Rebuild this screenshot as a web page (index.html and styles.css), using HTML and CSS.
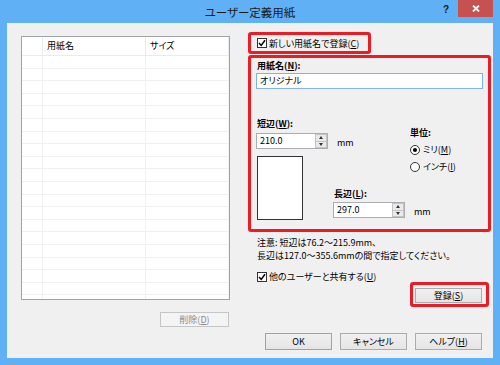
FILE: index.html
```html
<!DOCTYPE html>
<html lang="ja">
<head>
<meta charset="utf-8">
<title>ユーザー定義用紙</title>
<link rel="stylesheet" href="styles.css">
</head>
<body>
<div class="window">
  <div class="titlebar">
    <div></div>
    <div class="title">ユーザー定義用紙</div>
    <div class="controls">
      <span class="help">?</span>
      <span class="close"><svg width="8" height="7" viewBox="0 0 8 7"><path d="M1 0.5 L7 6.5 M7 0.5 L1 6.5" stroke="#fff" stroke-width="1.8"/></svg></span>
    </div>
  </div>
  <div class="client">
    <div class="main">
      <div class="left">
        <div class="list">
          <div class="list-head"><span class="c0"></span><span class="c1">用紙名</span><span class="c2">サイズ</span></div>
          <div class="list-row"><span class="c0"></span><span class="c1"></span><span class="c2"></span></div>
          <div class="list-row"><span class="c0"></span><span class="c1"></span><span class="c2"></span></div>
          <div class="list-row"><span class="c0"></span><span class="c1"></span><span class="c2"></span></div>
          <div class="list-row"><span class="c0"></span><span class="c1"></span><span class="c2"></span></div>
          <div class="list-row"><span class="c0"></span><span class="c1"></span><span class="c2"></span></div>
          <div class="list-row"><span class="c0"></span><span class="c1"></span><span class="c2"></span></div>
          <div class="list-row"><span class="c0"></span><span class="c1"></span><span class="c2"></span></div>
          <div class="list-row"><span class="c0"></span><span class="c1"></span><span class="c2"></span></div>
          <div class="list-row"><span class="c0"></span><span class="c1"></span><span class="c2"></span></div>
          <div class="list-row"><span class="c0"></span><span class="c1"></span><span class="c2"></span></div>
          <div class="list-row"><span class="c0"></span><span class="c1"></span><span class="c2"></span></div>
          <div class="list-row"><span class="c0"></span><span class="c1"></span><span class="c2"></span></div>
          <div class="list-row"><span class="c0"></span><span class="c1"></span><span class="c2"></span></div>
          <div class="list-row"><span class="c0"></span><span class="c1"></span><span class="c2"></span></div>
          <div class="list-row"><span class="c0"></span><span class="c1"></span><span class="c2"></span></div>
          <div class="list-row"><span class="c0"></span><span class="c1"></span><span class="c2"></span></div>
          <div class="list-row"><span class="c0"></span><span class="c1"></span><span class="c2"></span></div>
          <div class="list-row"><span class="c0"></span><span class="c1"></span><span class="c2"></span></div>
          <div class="list-row"><span class="c0"></span><span class="c1"></span><span class="c2"></span></div>
          <div class="list-row"><span class="c0"></span><span class="c1"></span><span class="c2"></span></div>
        </div>
        <div class="btn disabled del-btn">削除(<u>D</u>)</div>
      </div>
      <div class="right">
        <div class="hl hl-new">
          <div class="check"><span class="box"><svg width="8" height="8" viewBox="0 0 8 8"><path d="M1 4 L3.2 6.4 L7 1.2" fill="none" stroke="#000" stroke-width="1.5"/></svg></span><span>新しい用紙名で登録(<u>C</u>)</span></div>
        </div>
        <div class="hl hl-form">
          <div class="label">用紙名(<u>N</u>):</div>
          <div class="textbox">オリジナル</div>
          <div class="dims">
            <div class="col col-short">
              <div class="label">短辺(<u>W</u>):</div>
              <div class="spin-row">
                <div class="spin"><span class="val">210.0</span><span class="arrows"><span class="arr"><i class="tri up"></i></span><span class="arr"><i class="tri down"></i></span></span></div>
                <span class="unit">mm</span>
              </div>
              <div class="preview"></div>
            </div>
            <div class="col col-long">
              <div class="label">長辺(<u>L</u>):</div>
              <div class="spin-row">
                <div class="spin"><span class="val">297.0</span><span class="arrows"><span class="arr"><i class="tri up"></i></span><span class="arr"><i class="tri down"></i></span></span></div>
                <span class="unit">mm</span>
              </div>
            </div>
            <div class="col col-unit">
              <div class="label">単位:</div>
              <div class="radio first"><span class="dot on"></span><span>ミリ(<u>M</u>)</span></div>
              <div class="radio"><span class="dot"></span><span>インチ(<u>I</u>)</span></div>
            </div>
          </div>
        </div>
        <div class="note"><div>注意: 短辺は76.2～215.9mm、</div><div>長辺は127.0～355.6mmの間で指定してください。</div></div>
        <div class="check share"><span class="box"><svg width="8" height="8" viewBox="0 0 8 8"><path d="M1 4 L3.2 6.4 L7 1.2" fill="none" stroke="#000" stroke-width="1.5"/></svg></span><span>他のユーザーと共有する(<u>U</u>)</span></div>
        <div class="reg-row">
          <div class="hl hl-reg"><div class="btn reg-btn">登録(<u>S</u>)</div></div>
        </div>
      </div>
    </div>
    <div class="footer">
      <div class="btn default">OK</div>
      <div class="btn">キャンセル</div>
      <div class="btn">ヘルプ(<u>H</u>)</div>
    </div>
  </div>
</div>
</body>
</html>
```

FILE: styles.css
```css
* { box-sizing: border-box; }
html, body { margin: 0; padding: 0; }
body {
  width: 500px;
  height: 365px;
  overflow: hidden;
  font-family: "Noto Sans CJK JP", "Noto Sans", sans-serif;
  font-feature-settings: "palt";
  color: #000;
}
u { text-decoration: underline; text-underline-offset: 1px; }

.window {
  width: 500px;
  height: 365px;
  background: #5fb0f4;
  display: flex;
  flex-direction: column;
}

.titlebar {
  height: 23px;
  display: grid;
  grid-template-columns: 1fr auto 1fr;
  align-items: start;
}
.title {
  font-size: 11.5px;
  line-height: 24px;
  color: #1a1a1a;
}
.controls {
  justify-self: end;
  display: flex;
  align-items: flex-start;
  padding-right: 7px;
}
.help {
  font-family: "Liberation Sans", sans-serif;
  font-weight: bold;
  font-size: 10px;
  line-height: 10px;
  margin-top: 5px;
  margin-right: 9px;
  color: #1a1a1a;
}
.close {
  width: 35px;
  height: 17px;
  background: #c75050;
  display: flex;
  align-items: center;
  justify-content: center;
}

.client {
  flex: 1;
  margin: 0 7px 7px 7px;
  background: #f0f0f0;
  padding: 9px 0 8px 14px;
  display: flex;
  flex-direction: column;
  font-size: 9px;
  line-height: 11px;
}

.main {
  display: flex;
  align-items: flex-start;
}

.left {
  width: 209px;
  display: flex;
  flex-direction: column;
}
.list {
  margin-top: 4px;
  height: 264px;
  border: 1px solid #a3a3a3;
  background: #fff;
  overflow: hidden;
}
.list-head, .list-row {
  display: grid;
  grid-template-columns: 20px 103px 1fr;
}
.list-head {
  height: 19px;
  border-bottom: 1px solid #e3ecf7;
}
.list-head span {
  line-height: 18px;
  padding-left: 4px;
  border-left: 1px solid #e3ecf7;
}
.list-head .c0 { border-left: none; }
.list-head .c2 { border-right: 1px solid #e3ecf7; }
.list-row {
  height: 12.6px;
  border-bottom: 1px solid #f0f0f0;
}
.list-row span { border-left: 1px solid #f0f0f0; }
.list-row .c0 { border-left: none; }
.list-row .c2 { border-right: 1px solid #f0f0f0; }

.btn {
  height: 17px;
  width: 67px;
  border: 1px solid #acacac;
  background: linear-gradient(#f0f0f0, #e5e5e5);
  display: flex;
  align-items: center;
  justify-content: center;
  font-size: 9px;
  line-height: 11px;
}
.btn.default { border-color: #6bb0ea; }
.btn.disabled {
  background: #f4f4f4;
  border-color: #c3c6c9;
  color: #8a8a8a;
}
.del-btn {
  margin-top: 12px;
  align-self: flex-end;
  margin-right: 1px;
  width: 69px;
  height: 15px;
}

.right {
  margin-left: 18px;
  width: 243px;
  display: flex;
  flex-direction: column;
}
.hl {
  border: 3px solid #ec1c24;
  border-radius: 3px;
}
.hl-new {
  width: 123px;
  height: 22px;
  display: flex;
  align-items: center;
  padding-left: 6px;
}
.check {
  display: flex;
  align-items: center;
}
.box {
  width: 10px;
  height: 10px;
  border: 1px solid #333;
  background: #fff;
  display: flex;
  align-items: center;
  justify-content: center;
  margin-right: 2px;
  flex-shrink: 0;
}

.hl-form {
  margin-top: 1px;
  width: 243px;
  height: 177px;
  padding: 2px 5px 0 5px;
}
.label { font-weight: bold; padding-left: 1px; }
.textbox {
  margin-top: 2px;
  width: 227px;
  height: 16px;
  border: 1px solid #7eb4ea;
  background: #fff;
  padding-left: 3px;
  line-height: 14px;
}
.dims {
  margin-top: 29px;
  display: flex;
  align-items: flex-start;
}
.col { flex-shrink: 0; display: flex; flex-direction: column; }
.col-short { width: 77px; }
.col-long { width: 77px; }
.col-long .label { margin-top: 70px; }
.col-long .spin-row { margin-top: 3px; }
.col-short .spin-row { margin-top: 4px; }
.spin-row {
  display: flex;
  align-items: center;
  width: 110px;
}
.spin {
  width: 72px;
  height: 16px;
  border: 1px solid #abadb3;
  background: #fff;
  display: flex;
  flex-shrink: 0;
}
.val {
  flex: 1;
  padding-left: 3px;
  line-height: 14px;
}
.arrows {
  width: 12px;
  display: flex;
  flex-direction: column;
}
.arr {
  flex: 1;
  background: #eaeaea;
  border: 1px solid #c4c4c4;
  display: flex;
  align-items: center;
  justify-content: center;
}
.arr + .arr { border-top: none; }
.tri {
  width: 0;
  height: 0;
  border-left: 2.5px solid transparent;
  border-right: 2.5px solid transparent;
}
.tri.up { border-bottom: 3px solid #333; }
.tri.down { border-top: 3px solid #333; }
.unit { margin-left: 9px; margin-top: 3px; }
.preview {
  margin-top: 7px;
  margin-left: 1px;
  width: 46px;
  height: 64px;
  border: 1px solid #333;
  background: #fff;
}
.col-unit { padding-top: 9px; }
.col-unit .label { padding-left: 0; }
.radio {
  display: flex;
  align-items: center;
  margin-top: 6px;
}
.dot {
  width: 10px;
  height: 10px;
  border: 1px solid #333;
  border-radius: 50%;
  background: #fff;
  margin-right: 3px;
  display: flex;
  align-items: center;
  justify-content: center;
}
.dot.on::after {
  content: "";
  width: 4px;
  height: 4px;
  border-radius: 50%;
  background: #000;
}

.note {
  margin-top: 4px;
  padding-left: 9px;
  line-height: 13px;
}
.share {
  margin-top: 9px;
  padding-left: 9px;
  height: 11px;
}
.reg-row {
  display: flex;
  justify-content: flex-end;
  padding-right: 2px;
}
.hl-reg {
  width: 79px;
  height: 25px;
  padding: 3px 0 0 2px;
}
.reg-btn { height: 15px; }

.footer {
  margin-top: 6px;
  display: flex;
  justify-content: flex-end;
  gap: 8px;
  padding-right: 11px;
}
```
